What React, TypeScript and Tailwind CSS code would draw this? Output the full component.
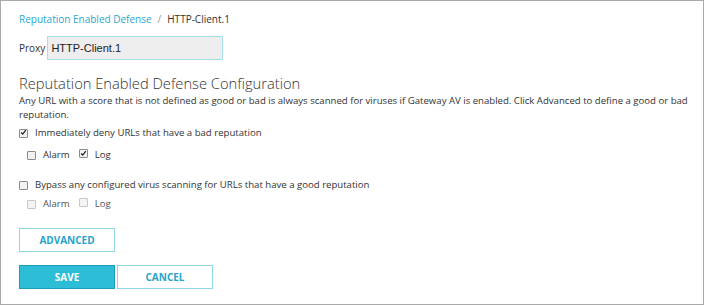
import React, { useState } from 'react';

function Check({ checked, disabled, onChange }: { checked: boolean; disabled?: boolean; onChange?: () => void }) {
  return (
    <span
      onClick={disabled ? undefined : onChange}
      className={`inline-flex items-center justify-center w-[9px] h-[9px] rounded-[1px] border ${
        disabled ? 'border-[#c8c8c8] bg-[#f4f4f4]' : 'border-[#8c8c8c] bg-[#f2f2f2]'
      }`}
    >
      {checked && (
        <svg width="9" height="9" viewBox="0 0 9 9" className="-mt-[1px]">
          <path d="M1.5 4.5 L3.5 6.5 L7.5 1.5" fill="none" stroke="#222" strokeWidth="1.6" />
        </svg>
      )}
    </span>
  );
}

export default function App() {
  const [deny, setDeny] = useState(true);
  const [denyAlarm, setDenyAlarm] = useState(false);
  const [denyLog, setDenyLog] = useState(true);
  const [bypass, setBypass] = useState(false);

  return (
    <div className="w-[704px] h-[305px] bg-white border border-[#a9a9a9] text-[#333] font-['Open_Sans',sans-serif] text-[9.6px] pl-[18px] pt-[11px]">
      <div className="h-[15px] flex items-center text-[10px]">
        <span className="text-[#2aa8cf]">Reputation Enabled Defense</span>
        <span className="text-[#999] mx-[6px]">/</span>
        <span className="text-[#333]">HTTP-Client.1</span>
      </div>
      <div className="flex items-center mt-[9px]">
        <span className="text-[10px] mr-[2px]">Proxy</span>
        <div className="w-[176px] h-[24px] bg-[#eeeeee] border border-[#a7dfeb] flex items-center px-[3px] font-['Liberation_Sans',sans-serif] text-[11px] text-[#222]">
          HTTP-Client.1
        </div>
      </div>
      <h2 className="mt-[13px] text-[14.7px] font-light leading-[20px] text-[#333]">
        Reputation Enabled Defense Configuration
      </h2>
      <p className="leading-[14px] mt-[1px] -mr-[2px]">
        Any URL with a score that is not defined as good or bad is always scanned for viruses if Gateway AV is enabled. Click Advanced to define a good or bad reputation.
      </p>
      <div className="flex items-center gap-[7px] mt-[4px] h-[14px]">
        <Check checked={deny} onChange={() => setDeny(!deny)} />
        <span>Immediately deny URLs that have a bad reputation</span>
      </div>
      <div className="flex items-center ml-[8px] mt-[8px] h-[14px]">
        <Check checked={denyAlarm} onChange={() => setDenyAlarm(!denyAlarm)} />
        <span className="ml-[7px]">Alarm</span>
        <span className="ml-[9px]">
          <Check checked={denyLog} onChange={() => setDenyLog(!denyLog)} />
        </span>
        <span className="ml-[7px]">Log</span>
      </div>
      <div className="flex items-center gap-[7px] mt-[16px] h-[14px]">
        <Check checked={bypass} onChange={() => setBypass(!bypass)} />
        <span>Bypass any configured virus scanning for URLs that have a good reputation</span>
      </div>
      <div className="flex items-center ml-[8px] mt-[5px] h-[14px]">
        <Check checked={false} disabled />
        <span className="ml-[7px] text-[#555]">Alarm</span>
        <span className="ml-[9px]">
          <Check checked={false} disabled />
        </span>
        <span className="ml-[7px] text-[#555]">Log</span>
      </div>
      <button className="mt-[17px] w-[96px] h-[24px] border border-[#8fd6e6] bg-white text-[#2aa3c6] font-bold text-[10px] flex items-center justify-center">
        ADVANCED
      </button>
      <div className="flex gap-[2px] mt-[13px]">
        <button className="w-[96px] h-[24px] border border-[#1a9fb8] bg-[#2ebdd6] text-white font-bold text-[10px] flex items-center justify-center">
          SAVE
        </button>
        <button className="w-[96px] h-[24px] border border-[#8fd6e6] bg-white text-[#2aa3c6] font-bold text-[10px] flex items-center justify-center">
          CANCEL
        </button>
      </div>
    </div>
  );
}
